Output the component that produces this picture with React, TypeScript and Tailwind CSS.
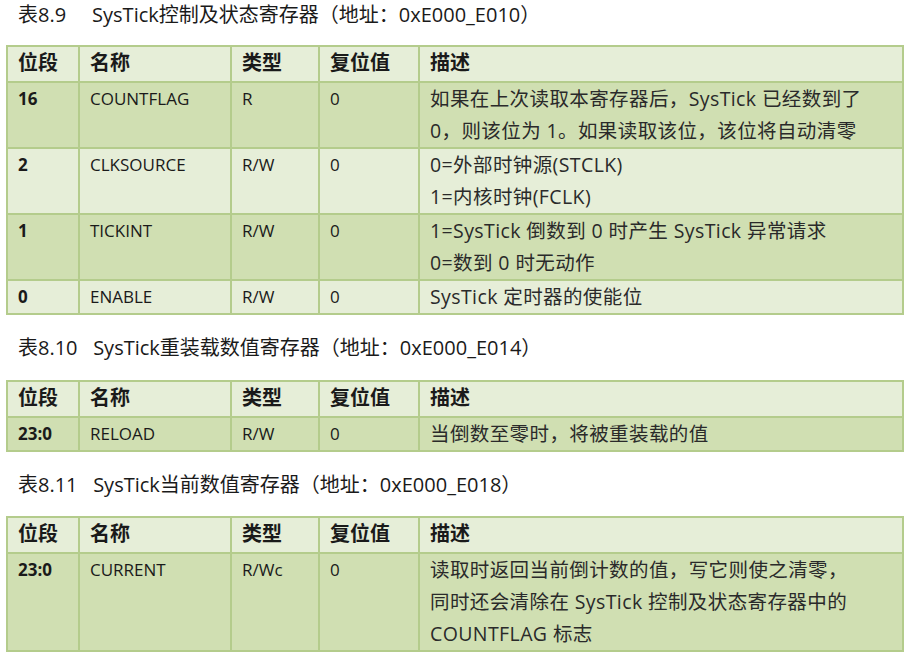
const F = { fontFamily: '"Open Sans","Noto Sans CJK SC",sans-serif' };

type Row = { bit: string; name: string; type: string; reset: string; desc: string[] };

function Table({ rows }: { rows: Row[] }) {
  const cell = "border-2 border-[#b4cc8c] px-[10px] align-top";
  return (
    <table className="w-[898px] border-collapse ml-[6px] text-[17px] text-[#1a1a1a] leading-[32px]">
      <colgroup>
        <col className="w-[72px]" />
        <col className="w-[152px]" />
        <col className="w-[88px]" />
        <col className="w-[100px]" />
        <col />
      </colgroup>
      <thead>
        <tr className="bg-[#e6eed8] font-bold text-[20px]">
          <td className={cell + " h-[36px] py-0"}>位段</td>
          <td className={cell}>名称</td>
          <td className={cell}>类型</td>
          <td className={cell}>复位值</td>
          <td className={cell}>描述</td>
        </tr>
      </thead>
      <tbody>
        {rows.map((r, i) => (
          <tr key={r.bit} className={i % 2 === 0 ? "bg-[#d0dfb2]" : "bg-[#e6eed8]"}>
            <td className={cell + " font-bold py-0"}>{r.bit}</td>
            <td className={cell}>{r.name}</td>
            <td className={cell}>{r.type}</td>
            <td className={cell}>{r.reset}</td>
            <td className={cell + " text-[19.5px] text-[#2a2a2a] tracking-[0.4px]"}>
              {r.desc.map((d) => (
                <div key={d} className="whitespace-nowrap">{d}</div>
              ))}
            </td>
          </tr>
        ))}
      </tbody>
    </table>
  );
}

function Title({ children }: { children: string }) {
  return <div className="text-[20px] text-[#1a1a1a] pl-[18px] h-[32px] leading-[30px]">{children}</div>;
}

export default function App() {
  return (
    <div className="w-[912px] h-[656px] bg-white overflow-hidden" style={F}>
      <Title>表8.9 &nbsp;&nbsp;&nbsp;&nbsp;SysTick控制及状态寄存器（地址：0xE000_E010）</Title>
      <div className="h-[13px]" />
      <Table
        rows={[
          { bit: "16", name: "COUNTFLAG", type: "R", reset: "0", desc: ["如果在上次读取本寄存器后，SysTick 已经数到了", "0，则该位为 1。如果读取该位，该位将自动清零"] },
          { bit: "2", name: "CLKSOURCE", type: "R/W", reset: "0", desc: ["0=外部时钟源(STCLK)", "1=内核时钟(FCLK)"] },
          { bit: "1", name: "TICKINT", type: "R/W", reset: "0", desc: ["1=SysTick 倒数到 0 时产生 SysTick 异常请求", "0=数到 0 时无动作"] },
          { bit: "0", name: "ENABLE", type: "R/W", reset: "0", desc: ["SysTick 定时器的使能位"] },
        ]}
      />
      <div className="h-[18px]" />
      <Title>表8.10 &nbsp;&nbsp;SysTick重装载数值寄存器（地址：0xE000_E014）</Title>
      <div className="h-[15px]" />
      <Table rows={[{ bit: "23:0", name: "RELOAD", type: "R/W", reset: "0", desc: ["当倒数至零时，将被重装载的值"] }]} />
      <div className="h-[18px]" />
      <Title>表8.11 &nbsp;&nbsp;SysTick当前数值寄存器（地址：0xE000_E018）</Title>
      <div className="h-[14px]" />
      <Table
        rows={[
          { bit: "23:0", name: "CURRENT", type: "R/Wc", reset: "0", desc: ["读取时返回当前倒计数的值，写它则使之清零，", "同时还会清除在 SysTick 控制及状态寄存器中的", "COUNTFLAG 标志"] },
        ]}
      />
    </div>
  );
}
